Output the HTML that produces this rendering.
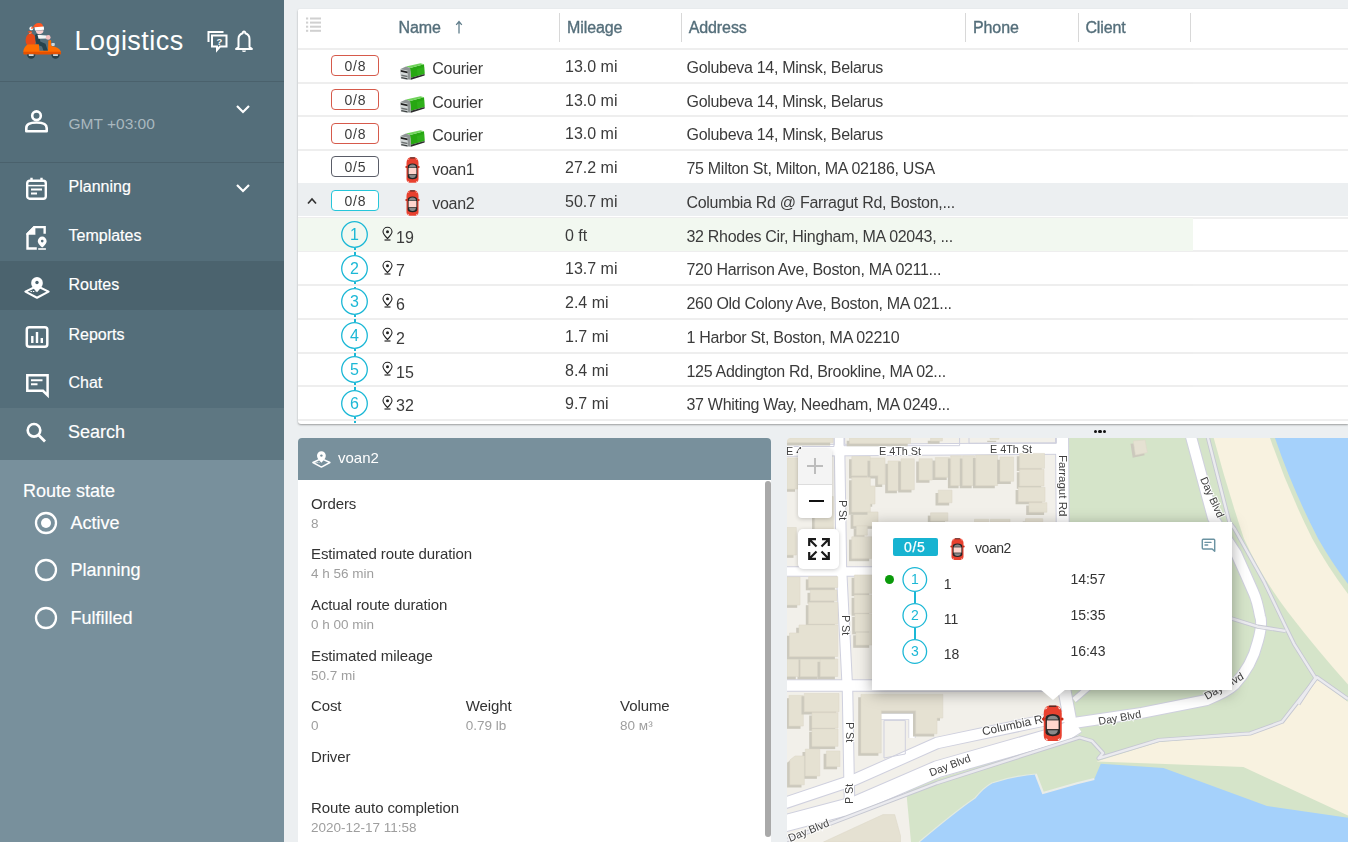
<!DOCTYPE html>
<html><head><meta charset="utf-8"><style>
html,body{margin:0;padding:0;}
body{width:1348px;height:842px;overflow:hidden;position:relative;background:#eceff1;font-family:"Liberation Sans", sans-serif;}
.t{position:absolute;line-height:1;white-space:nowrap;}
svg{overflow:visible}
</style></head><body>
<div style="position:absolute;left:0px;top:0px;width:284px;height:460px;background:#546e7a"></div><div style="position:absolute;left:0px;top:460px;width:284px;height:382px;background:#78909c"></div><div style="position:absolute;left:0px;top:81px;width:284px;height:1px;background:#4a616c"></div><div style="position:absolute;left:0px;top:162px;width:284px;height:1px;background:#4a616c"></div><div style="position:absolute;left:0px;top:261px;width:284px;height:49px;background:#4b636e"></div><div style="position:absolute;left:0px;top:407.5px;width:284px;height:52.5px;background:#5e7782"></div><svg style="position:absolute;left:22px;top:22px;" width="40" height="38" viewBox="0 0 40 38">
<path d="M5.5 10 Q7 8.5 9.5 9.3 Q10.5 10.5 9.5 11.5 Z" fill="#e8501e"/>
<path d="M8 11 Q13.5 12 13.8 18 Q14 24 8.5 24 Q3.5 24 3.6 18 Q3.8 13 8 11Z" fill="#e64a19"/>
<path d="M7.2 11.5 L9.5 10.8" stroke="#ffd0c0" stroke-width="0.7"/>
<path d="M13 13 Q15 11 17.5 12 L18.2 19.5 L23.5 21.8 L25.8 28.8 L21.5 28.8 L20 24.5 L14.5 22.5 Q13 19 13 13Z" fill="#26434d"/>
<path d="M15.5 12.8 L24.5 13.6 L25 16.5 L16.5 16.8 Z" fill="#f4f4f4"/>
<circle cx="26.2" cy="15.4" r="2.4" fill="#f6c0c0"/>
<path d="M13.8 8.5 Q14 12 17.5 12.2 Q21.5 12 21.5 8.3 Z" fill="#f9cfcf"/>
<path d="M11 5.5 Q12.5 0.8 17 1 Q21 1.2 21 5 Z" fill="#ff5722"/>
<path d="M12.5 5.2 L21.8 4.4 L22.1 7.8 L13 8.6 Z" fill="#ffffff"/>
<circle cx="9.3" cy="6.4" r="1.9" fill="#ffffff"/>
<path d="M11 5.5 L9.3 6.4" stroke="#ff5722" stroke-width="1.5"/>
<path d="M1.3 30 Q1.6 25 5.5 22.5 L16.8 22.2 L17.5 28.8 L26 28.8 L26.3 18.5 L29 18 L29.3 24 Q37.5 25 39 30 Z" fill="#ff6d00"/>
<rect x="29.3" y="20.9" width="3.5" height="3" rx="0.8" fill="#cfd8dc"/>
<rect x="1.3" y="29.8" width="37.7" height="2.7" rx="1" fill="#e65100"/>
<path d="M5 32.5 a4.2 4.2 0 0 0 8.4 0z" fill="#263f48"/>
<path d="M29.3 32.5 a4.2 4.2 0 0 0 8.4 0z" fill="#263f48"/>
<rect x="6.8" y="32.4" width="4.8" height="1.4" fill="#fff"/>
<rect x="31.1" y="32.4" width="4.8" height="1.4" fill="#fff"/>
</svg><div class="t" style="left:74.5px;top:28.14px;font-size:27px;color:#fff;font-weight:400;letter-spacing:0.45px">Logistics</div><svg style="position:absolute;left:206px;top:29px;" width="22" height="23" viewBox="0 0 22 23">
<path d="M2.5 13 V3 H17.5" fill="none" stroke="#fff" stroke-width="2"/>
<path d="M6 6.5 H20.5 V17.5 H14 L11 21 V17.5 H6 Z" fill="none" stroke="#fff" stroke-width="2" stroke-linejoin="miter"/>
<text x="13.3" y="15.6" font-size="9.5" font-weight="bold" fill="#fff" text-anchor="middle">?</text>
</svg><svg style="position:absolute;left:234px;top:29px;" width="20" height="23" viewBox="0 0 20 23">
<path d="M10 2.5 a1.3 1.3 0 0 1 1.3 1.3 V4.3 A6 6 0 0 1 15.5 10 V18 L18 20 H2 L4.5 18 V10 A6 6 0 0 1 8.7 4.3 V3.8 A1.3 1.3 0 0 1 10 2.5Z" fill="none" stroke="#fff" stroke-width="2" stroke-linejoin="round"/>
<path d="M8 21.5 h4 a2 1.5 0 0 1 -4 0z" fill="#fff"/>
</svg><svg style="position:absolute;left:24px;top:108px;" width="25" height="26" viewBox="0 0 25 26">
<circle cx="12.5" cy="7.7" r="4.3" fill="none" stroke="#fff" stroke-width="2.6"/>
<path d="M2.3 23.3 V20 Q2.3 14.5 12.5 14.5 Q22.7 14.5 22.7 20 V23.3 Z" fill="none" stroke="#fff" stroke-width="2.6" stroke-linejoin="round"/>
</svg><div class="t" style="left:68.5px;top:115.68px;font-size:15.5px;color:#a9b8bf;font-weight:400;">GMT +03:00</div><svg style="position:absolute;left:236px;top:104.5px;" width="14" height="8" viewBox="0 0 14 8"><path d="M1 1 L7.0 7 L13 1" fill="none" stroke="#fff" stroke-width="2.2"/></svg><svg style="position:absolute;left:236px;top:183.5px;" width="14" height="8" viewBox="0 0 14 8"><path d="M1 1 L7.0 7 L13 1" fill="none" stroke="#fff" stroke-width="2.2"/></svg><svg style="position:absolute;left:25px;top:177px;" width="23" height="24" viewBox="0 0 23 24">
<rect x="2.2" y="3.7" width="18.6" height="18" rx="2.5" fill="none" stroke="#fff" stroke-width="2.4"/>
<path d="M6.5 0.8 V5 M16.5 0.8 V5" stroke="#fff" stroke-width="2.4"/>
<path d="M2.2 8.6 H20.8" stroke="#fff" stroke-width="1.5"/>
<path d="M6 12.5 H17 M6 16.5 H12" stroke="#fff" stroke-width="2"/>
</svg><div class="t" style="left:68.5px;top:179.45px;font-size:16px;color:#fff;font-weight:400;-webkit-text-stroke:0.18px #fff">Planning</div><svg style="position:absolute;left:25px;top:225px;" width="23" height="26" viewBox="0 0 23 26">
<path d="M11.8 23.5 H2.5 V9.2 L9.2 2.1 H19.65 V8.8" fill="none" stroke="#fff" stroke-width="2.4" stroke-linejoin="miter"/>
<path d="M1.3 8.6 L9 0.9 L10.4 0.9 L10.4 9.8 L1.3 9.8Z" fill="#fff"/>
<path d="M17.2 22.6 C13.6 19.2 12.8 17.8 12.8 16 A4.4 4.4 0 0 1 21.6 16 C21.6 17.8 20.8 19.2 17.2 22.6Z" fill="#fff"/>
<circle cx="17.2" cy="16.1" r="1.35" fill="#546e7a"/>
<path d="M13.2 24 H20.9" stroke="#fff" stroke-width="1.6"/>
</svg><div class="t" style="left:68.5px;top:228.45px;font-size:16px;color:#fff;font-weight:400;-webkit-text-stroke:0.18px #fff">Templates</div><svg style="position:absolute;left:24px;top:276px;" width="26" height="24" viewBox="0 0 26 24">
<path d="M1.4 15.6 L13 10 L24.6 15.6 L13 21.8 Z" fill="none" stroke="#fff" stroke-width="2.1" stroke-linejoin="round"/>
<path d="M6.5 15.5 H11.5" stroke="#fff" stroke-width="1.1" stroke-dasharray="1.4 1"/>
<path d="M13 16.2 C8.8 12 7.2 10 7.2 6.8 A5.8 5.8 0 0 1 18.8 6.8 C18.8 10 17.2 12 13 16.2Z" fill="#fff"/>
<circle cx="13" cy="6.5" r="1.7" fill="#4b636e"/>
</svg><div class="t" style="left:68.5px;top:277.45px;font-size:16px;color:#fff;font-weight:400;-webkit-text-stroke:0.18px #fff">Routes</div><svg style="position:absolute;left:25px;top:325px;" width="24" height="23" viewBox="0 0 24 23">
<rect x="1.8" y="2.3" width="20.5" height="19.5" rx="2.5" fill="none" stroke="#fff" stroke-width="2.5"/>
<path d="M7.3 18 V11 M12 18 V7 M16.8 18 V13" stroke="#fff" stroke-width="2.4"/>
</svg><div class="t" style="left:68.5px;top:326.55px;font-size:16px;color:#fff;font-weight:400;-webkit-text-stroke:0.18px #fff">Reports</div><svg style="position:absolute;left:25px;top:373px;" width="25" height="24" viewBox="0 0 25 24">
<path d="M2.3 2.3 H22.6 V22.3 L18 17.8 H2.3 Z" fill="none" stroke="#fff" stroke-width="2.5" stroke-linejoin="miter"/>
<path d="M6 7.3 H17.5 M6 11.3 H12.5" stroke="#fff" stroke-width="2"/>
</svg><div class="t" style="left:68.5px;top:375.45px;font-size:16px;color:#fff;font-weight:400;-webkit-text-stroke:0.18px #fff">Chat</div><svg style="position:absolute;left:25px;top:421px;" width="22" height="23" viewBox="0 0 22 23">
<circle cx="9" cy="9.3" r="6.3" fill="none" stroke="#fff" stroke-width="2.6"/>
<path d="M13.5 14 L20 20.5" stroke="#fff" stroke-width="2.8"/>
</svg><div class="t" style="left:68px;top:423.16px;font-size:18px;color:#fff;font-weight:400;-webkit-text-stroke:0.18px #fff">Search</div><div class="t" style="left:23px;top:482.36px;font-size:18px;color:#fff;font-weight:400;-webkit-text-stroke:0.18px #fff">Route state</div><svg style="position:absolute;left:34px;top:511.20000000000005px;" width="24" height="24" viewBox="0 0 24 24"><circle cx="12" cy="12" r="10" fill="none" stroke="#fff" stroke-width="2.3"/><circle cx="12" cy="12" r="5" fill="#fff"/></svg><div class="t" style="left:70.5px;top:513.96px;font-size:18px;color:#fff;font-weight:400;-webkit-text-stroke:0.18px #fff">Active</div><svg style="position:absolute;left:34px;top:558.2px;" width="24" height="24" viewBox="0 0 24 24"><circle cx="12" cy="12" r="10" fill="none" stroke="#fff" stroke-width="2.3"/></svg><div class="t" style="left:70.5px;top:561.46px;font-size:18px;color:#fff;font-weight:400;-webkit-text-stroke:0.18px #fff">Planning</div><svg style="position:absolute;left:34px;top:606.1px;" width="24" height="24" viewBox="0 0 24 24"><circle cx="12" cy="12" r="10" fill="none" stroke="#fff" stroke-width="2.3"/></svg><div class="t" style="left:70.5px;top:608.96px;font-size:18px;color:#fff;font-weight:400;-webkit-text-stroke:0.18px #fff">Fulfilled</div><div style="position:absolute;left:0;top:0;width:1348px;height:842px;will-change:transform"><div style="position:absolute;left:298px;top:9px;width:1050px;height:415px;background:#fff;border-radius:1.5px 0 0 3px;box-shadow:0 1px 2px rgba(0,0,0,0.35)"></div><svg style="position:absolute;left:305px;top:16px;" width="17" height="17" viewBox="0 0 17 17">
<g fill="#d0d0d0"><rect x="1" y="1.5" width="2.2" height="2"/><rect x="5" y="1.5" width="11" height="2"/>
<rect x="1" y="5.6" width="2.2" height="2"/><rect x="5" y="5.6" width="11" height="2"/>
<rect x="1" y="9.7" width="2.2" height="2"/><rect x="5" y="9.7" width="11" height="2"/>
<rect x="1" y="13.8" width="2.2" height="2"/><rect x="5" y="13.8" width="11" height="2"/></g>
</svg><div class="t" style="left:398.5px;top:19.55px;font-size:16px;color:#546e7a;font-weight:400;-webkit-text-stroke:0.35px #546e7a;letter-spacing:-0.1px">Name</div><svg style="position:absolute;left:454px;top:20px;" width="10" height="14" viewBox="0 0 10 14"><path d="M5 13.5 V2 M2.2 4.8 L5 1.5 L7.8 4.8" fill="none" stroke="#607d8b" stroke-width="1.3"/></svg><div class="t" style="left:567px;top:19.55px;font-size:16px;color:#546e7a;font-weight:400;-webkit-text-stroke:0.35px #546e7a;letter-spacing:-0.1px">Mileage</div><div class="t" style="left:688.7px;top:19.55px;font-size:16px;color:#546e7a;font-weight:400;-webkit-text-stroke:0.35px #546e7a;letter-spacing:-0.1px">Address</div><div class="t" style="left:973px;top:19.55px;font-size:16px;color:#546e7a;font-weight:400;-webkit-text-stroke:0.35px #546e7a;letter-spacing:-0.1px">Phone</div><div class="t" style="left:1085.4px;top:19.55px;font-size:16px;color:#546e7a;font-weight:400;-webkit-text-stroke:0.35px #546e7a;letter-spacing:-0.1px">Client</div><div style="position:absolute;left:559px;top:13px;width:1px;height:29px;background:#d8d8d8"></div><div style="position:absolute;left:681px;top:13px;width:1px;height:29px;background:#d8d8d8"></div><div style="position:absolute;left:965px;top:13px;width:1px;height:29px;background:#d8d8d8"></div><div style="position:absolute;left:1078px;top:13px;width:1px;height:29px;background:#d8d8d8"></div><div style="position:absolute;left:1190px;top:13px;width:1px;height:29px;background:#d8d8d8"></div><div style="position:absolute;left:298px;top:48px;width:895px;height:2px;background:#eeeeee"></div><div style="position:absolute;left:1193px;top:48px;width:155px;height:1.5px;background:#efefef"></div><div style="position:absolute;left:298px;top:82px;width:895px;height:2px;background:#eeeeee"></div><div style="position:absolute;left:1193px;top:82px;width:155px;height:1.5px;background:#efefef"></div><div style="position:absolute;left:298px;top:115px;width:895px;height:2px;background:#eeeeee"></div><div style="position:absolute;left:1193px;top:115px;width:155px;height:1.5px;background:#efefef"></div><div style="position:absolute;left:298px;top:149px;width:895px;height:2px;background:#eeeeee"></div><div style="position:absolute;left:1193px;top:149px;width:155px;height:1.5px;background:#efefef"></div><div style="position:absolute;left:298px;top:183px;width:895px;height:2px;background:#eeeeee"></div><div style="position:absolute;left:1193px;top:183px;width:155px;height:1.5px;background:#efefef"></div><div style="position:absolute;left:298px;top:217px;width:895px;height:2px;background:#eeeeee"></div><div style="position:absolute;left:1193px;top:217px;width:155px;height:1.5px;background:#efefef"></div><div style="position:absolute;left:298px;top:250px;width:895px;height:2px;background:#eeeeee"></div><div style="position:absolute;left:1193px;top:250px;width:155px;height:1.5px;background:#efefef"></div><div style="position:absolute;left:298px;top:284px;width:895px;height:2px;background:#eeeeee"></div><div style="position:absolute;left:1193px;top:284px;width:155px;height:1.5px;background:#efefef"></div><div style="position:absolute;left:298px;top:318px;width:895px;height:2px;background:#eeeeee"></div><div style="position:absolute;left:1193px;top:318px;width:155px;height:1.5px;background:#efefef"></div><div style="position:absolute;left:298px;top:352px;width:895px;height:2px;background:#eeeeee"></div><div style="position:absolute;left:1193px;top:352px;width:155px;height:1.5px;background:#efefef"></div><div style="position:absolute;left:298px;top:385px;width:895px;height:2px;background:#eeeeee"></div><div style="position:absolute;left:1193px;top:385px;width:155px;height:1.5px;background:#efefef"></div><div style="position:absolute;left:298px;top:419px;width:895px;height:2px;background:#eeeeee"></div><div style="position:absolute;left:1193px;top:419px;width:155px;height:1.5px;background:#efefef"></div><div style="position:absolute;left:298px;top:183px;width:1050px;height:33px;background:#eceff1"></div><div style="position:absolute;left:298px;top:218px;width:895px;height:33px;background:#f2f8f0"></div><div style="position:absolute;left:331px;top:55px;width:46px;height:19px;border:1px solid #d65a4b;border-radius:4px;background:#fff"></div><div class="t" style="left:344.5px;top:58px;font-size:14px;line-height:16px;color:#3b3b3b;font-weight:400;letter-spacing:0.8px">0/8</div><svg style="position:absolute;left:400px;top:63px;" width="26" height="18" viewBox="0 0 26 18">
<path d="M10 5 L24 1.3 L24.6 11 L11 14.8z" fill="#27a712"/>
<path d="M6 3.4 L20.5 0.3 L24 1.3 L10 5z" fill="#6fd35a"/>
<path d="M17 6 L24.2 4 L24.5 10.5 L17.5 12.5z" fill="#35b51f" opacity="0.6"/>
<path d="M0.5 6 L6 3.4 L10 5 L11 16.8 L1 15.8z" fill="#8e9494"/>
<path d="M0.5 6.2 L7.5 7.6 L8 17 L1 15.8z" fill="#d3d8d8"/>
<path d="M0.8 7 L7.5 8.5 L7.5 10.2 L0.8 8.8z" fill="#1e1e1e"/>
<path d="M1.3 11.5 L7.5 12.8 L7.5 14.2 L1.3 13z" fill="#6d7272"/>
<path d="M1.3 14 L7.5 15.3 L7.6 16.5 L1.3 15.3z" fill="#3a3e3e"/>
<path d="M11 14.8 L24.6 11 L24.6 12.6 L11 16.8z" fill="#2c2c2c"/>
</svg><div class="t" style="left:432.3px;top:60px;font-size:16px;line-height:17px;color:#3b3b3b;font-weight:400;letter-spacing:-0.3px">Courier</div><div class="t" style="left:565px;top:58px;font-size:16px;line-height:17px;color:#3b3b3b;font-weight:400;">13.0 mi</div><div class="t" style="left:686.5px;top:59px;font-size:16px;line-height:17px;color:#3b3b3b;font-weight:400;letter-spacing:-0.3px">Golubeva 14, Minsk, Belarus</div><div style="position:absolute;left:331px;top:89px;width:46px;height:19px;border:1px solid #d65a4b;border-radius:4px;background:#fff"></div><div class="t" style="left:344.5px;top:92px;font-size:14px;line-height:16px;color:#3b3b3b;font-weight:400;letter-spacing:0.8px">0/8</div><svg style="position:absolute;left:400px;top:96px;" width="26" height="18" viewBox="0 0 26 18">
<path d="M10 5 L24 1.3 L24.6 11 L11 14.8z" fill="#27a712"/>
<path d="M6 3.4 L20.5 0.3 L24 1.3 L10 5z" fill="#6fd35a"/>
<path d="M17 6 L24.2 4 L24.5 10.5 L17.5 12.5z" fill="#35b51f" opacity="0.6"/>
<path d="M0.5 6 L6 3.4 L10 5 L11 16.8 L1 15.8z" fill="#8e9494"/>
<path d="M0.5 6.2 L7.5 7.6 L8 17 L1 15.8z" fill="#d3d8d8"/>
<path d="M0.8 7 L7.5 8.5 L7.5 10.2 L0.8 8.8z" fill="#1e1e1e"/>
<path d="M1.3 11.5 L7.5 12.8 L7.5 14.2 L1.3 13z" fill="#6d7272"/>
<path d="M1.3 14 L7.5 15.3 L7.6 16.5 L1.3 15.3z" fill="#3a3e3e"/>
<path d="M11 14.8 L24.6 11 L24.6 12.6 L11 16.8z" fill="#2c2c2c"/>
</svg><div class="t" style="left:432.3px;top:94px;font-size:16px;line-height:17px;color:#3b3b3b;font-weight:400;letter-spacing:-0.3px">Courier</div><div class="t" style="left:565px;top:92px;font-size:16px;line-height:17px;color:#3b3b3b;font-weight:400;">13.0 mi</div><div class="t" style="left:686.5px;top:93px;font-size:16px;line-height:17px;color:#3b3b3b;font-weight:400;letter-spacing:-0.3px">Golubeva 14, Minsk, Belarus</div><div style="position:absolute;left:331px;top:123px;width:46px;height:19px;border:1px solid #d65a4b;border-radius:4px;background:#fff"></div><div class="t" style="left:344.5px;top:126px;font-size:14px;line-height:16px;color:#3b3b3b;font-weight:400;letter-spacing:0.8px">0/8</div><svg style="position:absolute;left:400px;top:130px;" width="26" height="18" viewBox="0 0 26 18">
<path d="M10 5 L24 1.3 L24.6 11 L11 14.8z" fill="#27a712"/>
<path d="M6 3.4 L20.5 0.3 L24 1.3 L10 5z" fill="#6fd35a"/>
<path d="M17 6 L24.2 4 L24.5 10.5 L17.5 12.5z" fill="#35b51f" opacity="0.6"/>
<path d="M0.5 6 L6 3.4 L10 5 L11 16.8 L1 15.8z" fill="#8e9494"/>
<path d="M0.5 6.2 L7.5 7.6 L8 17 L1 15.8z" fill="#d3d8d8"/>
<path d="M0.8 7 L7.5 8.5 L7.5 10.2 L0.8 8.8z" fill="#1e1e1e"/>
<path d="M1.3 11.5 L7.5 12.8 L7.5 14.2 L1.3 13z" fill="#6d7272"/>
<path d="M1.3 14 L7.5 15.3 L7.6 16.5 L1.3 15.3z" fill="#3a3e3e"/>
<path d="M11 14.8 L24.6 11 L24.6 12.6 L11 16.8z" fill="#2c2c2c"/>
</svg><div class="t" style="left:432.3px;top:127px;font-size:16px;line-height:17px;color:#3b3b3b;font-weight:400;letter-spacing:-0.3px">Courier</div><div class="t" style="left:565px;top:125px;font-size:16px;line-height:17px;color:#3b3b3b;font-weight:400;">13.0 mi</div><div class="t" style="left:686.5px;top:126px;font-size:16px;line-height:17px;color:#3b3b3b;font-weight:400;letter-spacing:-0.3px">Golubeva 14, Minsk, Belarus</div><div style="position:absolute;left:331px;top:156px;width:46px;height:19px;border:1px solid #5a5d68;border-radius:4px;background:#fff"></div><div class="t" style="left:344.5px;top:159px;font-size:14px;line-height:16px;color:#3b3b3b;font-weight:400;letter-spacing:0.8px">0/5</div><svg style="position:absolute;left:406px;top:157px;" width="13" height="26" viewBox="0 0 13 26">
<path d="M3.5 0.5 L9.5 0.5 Q12.4 1.5 12.5 6 L12.5 22 Q12.4 25.3 9.5 25.8 L3.5 25.8 Q0.6 25.3 0.5 22 L0.5 6 Q0.6 1.5 3.5 0.5Z" fill="#e8412f"/>
<rect x="4" y="0.3" width="5" height="1.2" rx="0.4" fill="#5a2a24"/>
<path d="M1.6 3 L2.8 1.8 M11.4 3 L10.2 1.8 M1.8 24 L3 25 M11.2 24 L10 25" stroke="#fff" stroke-width="0.7" opacity="0.85"/>
<path d="M1.7 9.5 Q1.8 6.8 6.5 6.5 Q11.2 6.8 11.3 9.5 L11.3 19.5 Q11.2 22.2 6.5 22.3 Q1.8 22.2 1.7 19.5Z" fill="#262626"/>
<path d="M2.9 10.4 Q3.2 7.8 6.5 7.6 Q9.8 7.8 10.1 10.4Z" fill="#8a8a8a"/>
<rect x="2.6" y="11" width="7.8" height="6.2" fill="#ffd6ce"/>
<path d="M3.1 18 L9.9 18 Q9.7 20.9 6.5 21.1 Q3.3 20.9 3.1 18Z" fill="#8a8a8a"/>
<ellipse cx="0.3" cy="10" rx="1" ry="1.1" fill="#c62814"/><ellipse cx="12.7" cy="10" rx="1" ry="1.1" fill="#c62814"/>
</svg><div class="t" style="left:432.3px;top:161px;font-size:16px;line-height:17px;color:#3b3b3b;font-weight:400;letter-spacing:-0.3px">voan1</div><div class="t" style="left:565px;top:159px;font-size:16px;line-height:17px;color:#3b3b3b;font-weight:400;">27.2 mi</div><div class="t" style="left:686.5px;top:160px;font-size:16px;line-height:17px;color:#3b3b3b;font-weight:400;letter-spacing:-0.3px">75 Milton St, Milton, MA 02186, USA</div><div style="position:absolute;left:331px;top:190px;width:46px;height:19px;border:1px solid #26c6da;border-radius:4px;background:#fff"></div><div class="t" style="left:344.5px;top:193px;font-size:14px;line-height:16px;color:#3b3b3b;font-weight:400;letter-spacing:0.8px">0/8</div><svg style="position:absolute;left:406px;top:190px;" width="13" height="26" viewBox="0 0 13 26">
<path d="M3.5 0.5 L9.5 0.5 Q12.4 1.5 12.5 6 L12.5 22 Q12.4 25.3 9.5 25.8 L3.5 25.8 Q0.6 25.3 0.5 22 L0.5 6 Q0.6 1.5 3.5 0.5Z" fill="#e8412f"/>
<rect x="4" y="0.3" width="5" height="1.2" rx="0.4" fill="#5a2a24"/>
<path d="M1.6 3 L2.8 1.8 M11.4 3 L10.2 1.8 M1.8 24 L3 25 M11.2 24 L10 25" stroke="#fff" stroke-width="0.7" opacity="0.85"/>
<path d="M1.7 9.5 Q1.8 6.8 6.5 6.5 Q11.2 6.8 11.3 9.5 L11.3 19.5 Q11.2 22.2 6.5 22.3 Q1.8 22.2 1.7 19.5Z" fill="#262626"/>
<path d="M2.9 10.4 Q3.2 7.8 6.5 7.6 Q9.8 7.8 10.1 10.4Z" fill="#8a8a8a"/>
<rect x="2.6" y="11" width="7.8" height="6.2" fill="#ffd6ce"/>
<path d="M3.1 18 L9.9 18 Q9.7 20.9 6.5 21.1 Q3.3 20.9 3.1 18Z" fill="#8a8a8a"/>
<ellipse cx="0.3" cy="10" rx="1" ry="1.1" fill="#c62814"/><ellipse cx="12.7" cy="10" rx="1" ry="1.1" fill="#c62814"/>
</svg><div class="t" style="left:432.3px;top:195px;font-size:16px;line-height:17px;color:#3b3b3b;font-weight:400;letter-spacing:-0.3px">voan2</div><div class="t" style="left:565px;top:193px;font-size:16px;line-height:17px;color:#3b3b3b;font-weight:400;">50.7 mi</div><div class="t" style="left:686.5px;top:194px;font-size:16px;line-height:17px;color:#3b3b3b;font-weight:400;letter-spacing:-0.3px">Columbia Rd @ Farragut Rd, Boston,...</div><svg style="position:absolute;left:307.2px;top:198.3px;" width="10" height="6.5" viewBox="0 0 10 6.5"><path d="M1 5.5 L5.0 1 L9 5.5" fill="none" stroke="#333" stroke-width="1.7"/></svg><svg style="position:absolute;left:341px;top:220.9px;" width="27" height="27" viewBox="0 0 27 27"><circle cx="13.5" cy="13.5" r="12.8" fill="none" stroke="#1cb8d6" stroke-width="1.3"/><text x="13.5" y="19.3" font-size="16" fill="#1cb8d6" text-anchor="middle">1</text></svg><svg style="position:absolute;left:382px;top:227px;" width="11" height="14" viewBox="0 0 11 14"><path d="M5.5 11.5 C2 8 1 6.3 1 4.8 A4.5 4.5 0 0 1 10 4.8 C10 6.3 9 8 5.5 11.5Z" fill="none" stroke="#222" stroke-width="1.1"/>
<circle cx="5.5" cy="4.8" r="1.5" fill="#222"/><path d="M2.5 13 H8.5" stroke="#222" stroke-width="1.2"/></svg><div class="t" style="left:396px;top:229px;font-size:16px;line-height:17px;color:#3b3b3b;font-weight:400;">19</div><div class="t" style="left:565px;top:227px;font-size:16px;line-height:17px;color:#3b3b3b;font-weight:400;">0 ft</div><div class="t" style="left:686.5px;top:228px;font-size:16px;line-height:17px;color:#3b3b3b;font-weight:400;letter-spacing:-0.3px">32 Rhodes Cir, Hingham, MA 02043, ...</div><svg style="position:absolute;left:341px;top:254.65px;" width="27" height="27" viewBox="0 0 27 27"><circle cx="13.5" cy="13.5" r="12.8" fill="none" stroke="#1cb8d6" stroke-width="1.3"/><text x="13.5" y="19.3" font-size="16" fill="#1cb8d6" text-anchor="middle">2</text></svg><svg style="position:absolute;left:382px;top:261px;" width="11" height="14" viewBox="0 0 11 14"><path d="M5.5 11.5 C2 8 1 6.3 1 4.8 A4.5 4.5 0 0 1 10 4.8 C10 6.3 9 8 5.5 11.5Z" fill="none" stroke="#222" stroke-width="1.1"/>
<circle cx="5.5" cy="4.8" r="1.5" fill="#222"/><path d="M2.5 13 H8.5" stroke="#222" stroke-width="1.2"/></svg><div class="t" style="left:396px;top:262px;font-size:16px;line-height:17px;color:#3b3b3b;font-weight:400;">7</div><div class="t" style="left:565px;top:260px;font-size:16px;line-height:17px;color:#3b3b3b;font-weight:400;">13.7 mi</div><div class="t" style="left:686.5px;top:261px;font-size:16px;line-height:17px;color:#3b3b3b;font-weight:400;letter-spacing:-0.3px">720 Harrison Ave, Boston, MA 0211...</div><svg style="position:absolute;left:341px;top:288.4px;" width="27" height="27" viewBox="0 0 27 27"><circle cx="13.5" cy="13.5" r="12.8" fill="none" stroke="#1cb8d6" stroke-width="1.3"/><text x="13.5" y="19.3" font-size="16" fill="#1cb8d6" text-anchor="middle">3</text></svg><svg style="position:absolute;left:382px;top:294px;" width="11" height="14" viewBox="0 0 11 14"><path d="M5.5 11.5 C2 8 1 6.3 1 4.8 A4.5 4.5 0 0 1 10 4.8 C10 6.3 9 8 5.5 11.5Z" fill="none" stroke="#222" stroke-width="1.1"/>
<circle cx="5.5" cy="4.8" r="1.5" fill="#222"/><path d="M2.5 13 H8.5" stroke="#222" stroke-width="1.2"/></svg><div class="t" style="left:396px;top:296px;font-size:16px;line-height:17px;color:#3b3b3b;font-weight:400;">6</div><div class="t" style="left:565px;top:294px;font-size:16px;line-height:17px;color:#3b3b3b;font-weight:400;">2.4 mi</div><div class="t" style="left:686.5px;top:295px;font-size:16px;line-height:17px;color:#3b3b3b;font-weight:400;letter-spacing:-0.3px">260 Old Colony Ave, Boston, MA 021...</div><svg style="position:absolute;left:341px;top:322.15px;" width="27" height="27" viewBox="0 0 27 27"><circle cx="13.5" cy="13.5" r="12.8" fill="none" stroke="#1cb8d6" stroke-width="1.3"/><text x="13.5" y="19.3" font-size="16" fill="#1cb8d6" text-anchor="middle">4</text></svg><svg style="position:absolute;left:382px;top:328px;" width="11" height="14" viewBox="0 0 11 14"><path d="M5.5 11.5 C2 8 1 6.3 1 4.8 A4.5 4.5 0 0 1 10 4.8 C10 6.3 9 8 5.5 11.5Z" fill="none" stroke="#222" stroke-width="1.1"/>
<circle cx="5.5" cy="4.8" r="1.5" fill="#222"/><path d="M2.5 13 H8.5" stroke="#222" stroke-width="1.2"/></svg><div class="t" style="left:396px;top:330px;font-size:16px;line-height:17px;color:#3b3b3b;font-weight:400;">2</div><div class="t" style="left:565px;top:328px;font-size:16px;line-height:17px;color:#3b3b3b;font-weight:400;">1.7 mi</div><div class="t" style="left:686.5px;top:329px;font-size:16px;line-height:17px;color:#3b3b3b;font-weight:400;letter-spacing:-0.3px">1 Harbor St, Boston, MA 02210</div><svg style="position:absolute;left:341px;top:355.9px;" width="27" height="27" viewBox="0 0 27 27"><circle cx="13.5" cy="13.5" r="12.8" fill="none" stroke="#1cb8d6" stroke-width="1.3"/><text x="13.5" y="19.3" font-size="16" fill="#1cb8d6" text-anchor="middle">5</text></svg><svg style="position:absolute;left:382px;top:362px;" width="11" height="14" viewBox="0 0 11 14"><path d="M5.5 11.5 C2 8 1 6.3 1 4.8 A4.5 4.5 0 0 1 10 4.8 C10 6.3 9 8 5.5 11.5Z" fill="none" stroke="#222" stroke-width="1.1"/>
<circle cx="5.5" cy="4.8" r="1.5" fill="#222"/><path d="M2.5 13 H8.5" stroke="#222" stroke-width="1.2"/></svg><div class="t" style="left:396px;top:364px;font-size:16px;line-height:17px;color:#3b3b3b;font-weight:400;">15</div><div class="t" style="left:565px;top:362px;font-size:16px;line-height:17px;color:#3b3b3b;font-weight:400;">8.4 mi</div><div class="t" style="left:686.5px;top:363px;font-size:16px;line-height:17px;color:#3b3b3b;font-weight:400;letter-spacing:-0.3px">125 Addington Rd, Brookline, MA 02...</div><svg style="position:absolute;left:341px;top:389.65px;" width="27" height="27" viewBox="0 0 27 27"><circle cx="13.5" cy="13.5" r="12.8" fill="none" stroke="#1cb8d6" stroke-width="1.3"/><text x="13.5" y="19.3" font-size="16" fill="#1cb8d6" text-anchor="middle">6</text></svg><svg style="position:absolute;left:382px;top:396px;" width="11" height="14" viewBox="0 0 11 14"><path d="M5.5 11.5 C2 8 1 6.3 1 4.8 A4.5 4.5 0 0 1 10 4.8 C10 6.3 9 8 5.5 11.5Z" fill="none" stroke="#222" stroke-width="1.1"/>
<circle cx="5.5" cy="4.8" r="1.5" fill="#222"/><path d="M2.5 13 H8.5" stroke="#222" stroke-width="1.2"/></svg><div class="t" style="left:396px;top:397px;font-size:16px;line-height:17px;color:#3b3b3b;font-weight:400;">32</div><div class="t" style="left:565px;top:395px;font-size:16px;line-height:17px;color:#3b3b3b;font-weight:400;">9.7 mi</div><div class="t" style="left:686.5px;top:396px;font-size:16px;line-height:17px;color:#3b3b3b;font-weight:400;letter-spacing:-0.3px">37 Whiting Way, Needham, MA 0249...</div><div style="position:absolute;left:354px;top:247.80px;width:2px;height:6.95px;background:repeating-linear-gradient(#1cb8d6 0 2.5px, transparent 2.5px 4.5px)"></div><div style="position:absolute;left:354px;top:281.55px;width:2px;height:6.95px;background:repeating-linear-gradient(#1cb8d6 0 2.5px, transparent 2.5px 4.5px)"></div><div style="position:absolute;left:354px;top:315.30px;width:2px;height:6.95px;background:repeating-linear-gradient(#1cb8d6 0 2.5px, transparent 2.5px 4.5px)"></div><div style="position:absolute;left:354px;top:349.05px;width:2px;height:6.95px;background:repeating-linear-gradient(#1cb8d6 0 2.5px, transparent 2.5px 4.5px)"></div><div style="position:absolute;left:354px;top:382.80px;width:2px;height:6.95px;background:repeating-linear-gradient(#1cb8d6 0 2.5px, transparent 2.5px 4.5px)"></div><div style="position:absolute;left:354px;top:416.55px;width:2px;height:6.95px;background:repeating-linear-gradient(#1cb8d6 0 2.5px, transparent 2.5px 4.5px)"></div><div style="position:absolute;left:1093.6px;top:429.7px;width:3.4px;height:3.4px;background:#111;border-radius:50%"></div><div style="position:absolute;left:1098.3px;top:429.7px;width:3.4px;height:3.4px;background:#111;border-radius:50%"></div><div style="position:absolute;left:1103.1px;top:429.7px;width:3.4px;height:3.4px;background:#111;border-radius:50%"></div><div style="position:absolute;left:298px;top:438px;width:473px;height:404px;background:#fff;border-radius:4px 4px 0 0"></div><div style="position:absolute;left:298px;top:438px;width:473px;height:42px;background:#78909c;border-radius:4px 4px 0 0"></div><svg style="position:absolute;left:312px;top:450px;" width="20" height="19" viewBox="0 0 20 19">
<path d="M0.9 12.5 L9.4 8.6 L17.9 12.5 L9.4 17.1 Z" fill="none" stroke="#fff" stroke-width="1.5" stroke-linejoin="round"/>
<path d="M3.5 12.4 H7.5" stroke="#fff" stroke-width="0.9" stroke-dasharray="1 0.8"/>
<path d="M9.4 12.8 C6.2 9.6 5 8 5 5.6 A4.4 4.4 0 0 1 13.8 5.6 C13.8 8 12.6 9.6 9.4 12.8Z" fill="#fff"/>
<circle cx="9.4" cy="5.6" r="1.2" fill="#78909c"/>
</svg><div class="t" style="left:338px;top:449px;font-size:15px;line-height:17px;color:#fff;font-weight:400;">voan2</div><div style="position:absolute;left:765px;top:481px;width:6px;height:356px;background:#a9a9a9;border-radius:3px"></div><div class="t" style="left:311px;top:495px;font-size:15px;line-height:17px;color:#333;font-weight:400;letter-spacing:-0.1px">Orders</div><div class="t" style="left:311px;top:516px;font-size:13.5px;line-height:15px;color:#9e9e9e;font-weight:400;">8</div><div class="t" style="left:311px;top:545px;font-size:15px;line-height:17px;color:#333;font-weight:400;letter-spacing:-0.1px">Estimated route duration</div><div class="t" style="left:311px;top:566px;font-size:13.5px;line-height:15px;color:#9e9e9e;font-weight:400;">4 h 56 min</div><div class="t" style="left:311px;top:596px;font-size:15px;line-height:17px;color:#333;font-weight:400;letter-spacing:-0.1px">Actual route duration</div><div class="t" style="left:311px;top:617px;font-size:13.5px;line-height:15px;color:#9e9e9e;font-weight:400;">0 h 00 min</div><div class="t" style="left:311px;top:647px;font-size:15px;line-height:17px;color:#333;font-weight:400;letter-spacing:-0.1px">Estimated mileage</div><div class="t" style="left:311px;top:668px;font-size:13.5px;line-height:15px;color:#9e9e9e;font-weight:400;">50.7 mi</div><div class="t" style="left:311px;top:697px;font-size:15px;line-height:17px;color:#333;font-weight:400;letter-spacing:-0.1px">Cost</div><div class="t" style="left:311px;top:718px;font-size:13.5px;line-height:15px;color:#9e9e9e;font-weight:400;">0</div><div class="t" style="left:465.8px;top:697px;font-size:15px;line-height:17px;color:#333;font-weight:400;letter-spacing:-0.1px">Weight</div><div class="t" style="left:465.8px;top:718px;font-size:13.5px;line-height:15px;color:#9e9e9e;font-weight:400;">0.79 lb</div><div class="t" style="left:620.1px;top:697px;font-size:15px;line-height:17px;color:#333;font-weight:400;letter-spacing:-0.1px">Volume</div><div class="t" style="left:620.1px;top:718px;font-size:13.5px;line-height:15px;color:#9e9e9e;font-weight:400;">80 м³</div><div class="t" style="left:311px;top:748px;font-size:15px;line-height:17px;color:#333;font-weight:400;letter-spacing:-0.1px">Driver</div><div class="t" style="left:311px;top:799px;font-size:15px;line-height:17px;color:#333;font-weight:400;letter-spacing:-0.1px">Route auto completion</div><div class="t" style="left:311px;top:820px;font-size:13.5px;line-height:15px;color:#9e9e9e;font-weight:400;">2020-12-17 11:58</div><div style="position:absolute;left:787px;top:438px;width:561px;height:404px;overflow:hidden;border-radius:4px 0 0 0;background:#f0efe9"><svg width="561" height="404" viewBox="0 0 561 404" style="position:absolute;left:0;top:0">
<rect width="561" height="404" fill="#f2f0ea"/>
<path d="M279,0 L561,0 L561,404 L124,404 L119,351 L150,341 L292,297 L283,290 Z" fill="#d5e4c9"/>
<path d="M426.7,0 Q440,50 456.9,100.5 Q475,140 500.7,173.8 Q530,212 561,246.5 L561,0 Z" fill="#f8f2e0"/>
<path d="M483,0 Q500,50 525.2,100.5 Q540,128 561,156 L561,0 Z" fill="#d5e4c9"/>
<path d="M488,0 Q505,50 531,100.5 Q545,125 561,146 L561,0 Z" fill="#a5d1fb"/>
<path d="M309.5,323.6 L372,304 L463,296.6 L495,284.7 L532,242.5 L561,264 L561,377.6 L456.4,329 L372,325.7 Z" fill="#f8f2e0"/>
<path d="M511,266 L529,241 L561,264 L561,272 Z" fill="#f8f2e0"/>
<path d="M132,404 Q170,372 188.4,359.7 Q196,350 204.8,345 Q225,338 248.7,336 L256,355 L290,345.2 L307.3,341 L313.8,325.7 L376.5,330 L480,368 L561,379.8 L561,404 Z" fill="#a5d1fb"/>
<path d="M248.7,336 L256,355 L290,345.2 L307.3,341" fill="none" stroke="#e9ece8" stroke-width="2.2"/>
<path d="M132,404 Q170,372 188.4,359.7 Q196,350 204.8,345 Q225,338 248.7,336" fill="none" stroke="#e3eadf" stroke-width="1.2"/>
<path d="M-5,12.5 L281,10.5" fill="none" stroke="#cfd0de" stroke-width="12.5" stroke-linejoin="round"/>
<path d="M52.3,-5 L54.4,130 L60.5,252 L62,338 L62.8,378" fill="none" stroke="#cfd0de" stroke-width="11.5" stroke-linejoin="round"/>
<path d="M275,-5 L277,250 L285,292" fill="none" stroke="#cfd0de" stroke-width="14.0" stroke-linejoin="round"/>
<path d="M-5,133.5 L300,133.5" fill="none" stroke="#cfd0de" stroke-width="10.5" stroke-linejoin="round"/>
<path d="M-5,247.5 L283,247.5" fill="none" stroke="#cfd0de" stroke-width="12.5" stroke-linejoin="round"/>
<path d="M-5,366 L67.3,341.8 L150,305 L252,283.5 L280,278" fill="none" stroke="#cfd0de" stroke-width="12.5" stroke-linejoin="round"/>
<path d="M-5,386 L67.3,367 L150,331.3 L278,294.8 L290,287" fill="none" stroke="#cfd0de" stroke-width="18.0" stroke-linejoin="round"/>
<path d="M276,291 L290,284.5 L354.8,274.9 L419.7,262 Q440,254 447.3,247 Q465,228 470.8,203.7 Q476,185 473,178 Q470,162 466.5,154.5 Q458,135 449.4,116 L426,80 L403,-5" fill="none" stroke="#cfd0de" stroke-width="12.0" stroke-linejoin="round"/>
<path d="M287,262 L302,249" fill="none" stroke="#cfd0de" stroke-width="7.0" stroke-linejoin="round"/>
<path d="M-5,12.5 L281,10.5" fill="none" stroke="#ffffff" stroke-width="10.5" stroke-linejoin="round"/>
<path d="M52.3,-5 L54.4,130 L60.5,252 L62,338 L62.8,378" fill="none" stroke="#ffffff" stroke-width="9.5" stroke-linejoin="round"/>
<path d="M275,-5 L277,250 L285,292" fill="none" stroke="#ffffff" stroke-width="12" stroke-linejoin="round"/>
<path d="M-5,133.5 L300,133.5" fill="none" stroke="#ffffff" stroke-width="8.5" stroke-linejoin="round"/>
<path d="M-5,247.5 L283,247.5" fill="none" stroke="#ffffff" stroke-width="10.5" stroke-linejoin="round"/>
<path d="M-5,366 L67.3,341.8 L150,305 L252,283.5 L280,278" fill="none" stroke="#ffffff" stroke-width="10.5" stroke-linejoin="round"/>
<path d="M-5,386 L67.3,367 L150,331.3 L278,294.8 L290,287" fill="none" stroke="#ffffff" stroke-width="16" stroke-linejoin="round"/>
<path d="M276,291 L290,284.5 L354.8,274.9 L419.7,262 Q440,254 447.3,247 Q465,228 470.8,203.7 Q476,185 473,178 Q470,162 466.5,154.5 Q458,135 449.4,116 L426,80 L403,-5" fill="none" stroke="#ffffff" stroke-width="10" stroke-linejoin="round"/>
<path d="M287,262 L302,249" fill="none" stroke="#ffffff" stroke-width="5" stroke-linejoin="round"/>
<path d="M-5,404 L150,345 L292.6,299.4 L305,303 L316,315 L311.6,320.3 L372,302 L463,295.5 L495.3,283.6 L530,239.3 L561,261" fill="none" stroke="#c6c8d2" stroke-width="4.2" stroke-linejoin="round"/>
<path d="M419.7,-5 L442.3,84 L447.3,90.4 L477.2,143.9 L498.6,188.7 L507,205.8 L528.5,240 L511.4,266" fill="none" stroke="#c6c8d2" stroke-width="4.2" stroke-linejoin="round"/>
<path d="M443,180 L470.8,188.7 L498.6,193" fill="none" stroke="#c6c8d2" stroke-width="4.2" stroke-linejoin="round"/>
<path d="M-5,404 L150,345 L292.6,299.4 L305,303 L316,315 L311.6,320.3 L372,302 L463,295.5 L495.3,283.6 L530,239.3 L561,261" fill="none" stroke="#ebebef" stroke-width="2.4" stroke-linejoin="round"/>
<path d="M419.7,-5 L442.3,84 L447.3,90.4 L477.2,143.9 L498.6,188.7 L507,205.8 L528.5,240 L511.4,266" fill="none" stroke="#ebebef" stroke-width="2.4" stroke-linejoin="round"/>
<path d="M443,180 L470.8,188.7 L498.6,193" fill="none" stroke="#ebebef" stroke-width="2.4" stroke-linejoin="round"/>
<path d="M90,315 L90,278.5 L125,278.5 L125,300" fill="none" stroke="#cfd0de" stroke-width="7"/>
<path d="M90,315 L90,278.5 L125,278.5 L125,300" fill="none" stroke="#fff" stroke-width="5.5"/>
<path d="M97,282.4 L118.3,282.4 L118.3,316 L97,320 Z" fill="none" stroke="#cfd0de" stroke-width="1"/>
<path d="M-1,8.5 L47,8.5 L47,-1" fill="none" stroke="#cfd0de" stroke-width="1"/>
<path d="M57,-1 L57,7.7 L172.6,7.7 L172.6,-1" fill="none" stroke="#cfd0de" stroke-width="1"/>
<path d="M182,-1 L182,5.3 L269.4,5.3 L269.4,-1" fill="none" stroke="#cfd0de" stroke-width="1"/>
<path d="M-2.8,2.8 L43.2,2.8 L43.2,7.3999999999999995 L-2.8,7.3999999999999995Z" fill="#ccc9bd"/>
<path d="M0,0 L46,0 L46,4.6 L0,4.6Z" fill="#e5e1d2" stroke="#ddd9c9" stroke-width="0.6"/>
<path d="M59.7,2.8 L120.7,2.8 L120.7,8.2 L59.7,8.2Z" fill="#ccc9bd"/>
<path d="M62.5,0 L123.5,0 L123.5,5.4 L62.5,5.4Z" fill="#e5e1d2" stroke="#ddd9c9" stroke-width="0.6"/>
<path d="M140.79999999999998,2.8 L152.6,2.8 L152.6,5.8 L140.79999999999998,5.8Z" fill="#ccc9bd"/>
<path d="M143.6,0 L155.4,0 L155.4,3 L143.6,3Z" fill="#e5e1d2" stroke="#ddd9c9" stroke-width="0.6"/>
<path d="M200.2,2.8 L209.2,2.8 L209.2,4.0 L200.2,4.0Z" fill="#ccc9bd"/>
<path d="M203,0 L212,0 L212,1.2 L203,1.2Z" fill="#e5e1d2" stroke="#ddd9c9" stroke-width="0.6"/>
<path d="M62.0,21.3 L80.5,21.3 L80.5,40.599999999999994 L62.0,40.599999999999994Z" fill="#ccc9bd"/>
<path d="M64.8,18.5 L83.3,18.5 L83.3,37.8 L64.8,37.8Z" fill="#e5e1d2" stroke="#ddd9c9" stroke-width="0.6"/>
<path d="M98.2,25.8 L109.9,25.8 L109.9,55.3 L98.2,55.3Z" fill="#ccc9bd"/>
<path d="M101,23 L112.7,23 L112.7,52.5 L101,52.5Z" fill="#e5e1d2" stroke="#ddd9c9" stroke-width="0.6"/>
<path d="M111.2,23.6 L124.5,23.6 L124.5,54.5 L111.2,54.5Z" fill="#ccc9bd"/>
<path d="M114,20.8 L127.3,20.8 L127.3,51.7 L114,51.7Z" fill="#e5e1d2" stroke="#ddd9c9" stroke-width="0.6"/>
<path d="M129.2,23.6 L142.5,23.6 L142.5,44.8 L129.2,44.8Z" fill="#ccc9bd"/>
<path d="M132,20.8 L145.3,20.8 L145.3,42 L132,42Z" fill="#e5e1d2" stroke="#ddd9c9" stroke-width="0.6"/>
<path d="M145.5,22.400000000000002 L159.7,22.400000000000002 L159.7,42.0 L145.5,42.0Z" fill="#ccc9bd"/>
<path d="M148.3,19.6 L162.5,19.6 L162.5,39.2 L148.3,39.2Z" fill="#e5e1d2" stroke="#ddd9c9" stroke-width="0.6"/>
<path d="M160.89999999999998,20.6 L171.6,20.6 L171.6,50.3 L160.89999999999998,50.3Z" fill="#ccc9bd"/>
<path d="M163.7,17.8 L174.4,17.8 L174.4,47.5 L163.7,47.5Z" fill="#e5e1d2" stroke="#ddd9c9" stroke-width="0.6"/>
<path d="M172.79999999999998,20.6 L184.7,20.6 L184.7,50.3 L172.79999999999998,50.3Z" fill="#ccc9bd"/>
<path d="M175.6,17.8 L187.5,17.8 L187.5,47.5 L175.6,47.5Z" fill="#e5e1d2" stroke="#ddd9c9" stroke-width="0.6"/>
<path d="M185.89999999999998,20.0 L207.79999999999998,20.0 L207.79999999999998,50.3 L185.89999999999998,50.3Z" fill="#ccc9bd"/>
<path d="M188.7,17.2 L210.6,17.2 L210.6,47.5 L188.7,47.5Z" fill="#e5e1d2" stroke="#ddd9c9" stroke-width="0.6"/>
<path d="M210.2,21.8 L223.79999999999998,21.8 L223.79999999999998,46.099999999999994 L210.2,46.099999999999994Z" fill="#ccc9bd"/>
<path d="M213,19 L226.6,19 L226.6,43.3 L213,43.3Z" fill="#e5e1d2" stroke="#ddd9c9" stroke-width="0.6"/>
<path d="M229.79999999999998,18.2 L254.7,18.2 L254.7,33.1 L229.79999999999998,33.1Z" fill="#ccc9bd"/>
<path d="M232.6,15.4 L257.5,15.4 L257.5,30.3 L232.6,30.3Z" fill="#e5e1d2" stroke="#ddd9c9" stroke-width="0.6"/>
<path d="M229.79999999999998,34.3 L254.2,34.3 L254.2,50.8 L229.79999999999998,50.8Z" fill="#ccc9bd"/>
<path d="M232.6,31.5 L257,31.5 L257,48 L232.6,48Z" fill="#e5e1d2" stroke="#ddd9c9" stroke-width="0.6"/>
<path d="M228.6,52.099999999999994 L255.2,52.099999999999994 L255.2,66.3 L228.6,66.3Z" fill="#ccc9bd"/>
<path d="M231.4,49.3 L258,49.3 L258,63.5 L231.4,63.5Z" fill="#e5e1d2" stroke="#ddd9c9" stroke-width="0.6"/>
<path d="M239.2,67.5 L257.09999999999997,67.5 L257.09999999999997,77.0 L239.2,77.0Z" fill="#ccc9bd"/>
<path d="M242,64.7 L259.9,64.7 L259.9,74.2 L242,74.2Z" fill="#e5e1d2" stroke="#ddd9c9" stroke-width="0.6"/>
<path d="M148.5,55.0 L162.2,55.0 L162.2,67.5 L148.5,67.5Z" fill="#ccc9bd"/>
<path d="M151.3,52.2 L165,52.2 L165,64.7 L151.3,64.7Z" fill="#e5e1d2" stroke="#ddd9c9" stroke-width="0.6"/>
<path d="M63.60000000000001,76.8 L88.2,76.8 L88.2,90.8 L63.60000000000001,90.8Z" fill="#ccc9bd"/>
<path d="M66.4,74 L91,74 L91,88 L66.4,88Z" fill="#e5e1d2" stroke="#ddd9c9" stroke-width="0.6"/>
<path d="M66.7,90.8 L77.5,90.8 L77.5,100.0 L66.7,100.0Z" fill="#ccc9bd"/>
<path d="M69.5,88 L80.3,88 L80.3,97.2 L69.5,97.2Z" fill="#e5e1d2" stroke="#ddd9c9" stroke-width="0.6"/>
<path d="M62.0,101.6 L82.2,101.6 L82.2,123.2 L62.0,123.2Z" fill="#ccc9bd"/>
<path d="M64.8,98.8 L85,98.8 L85,120.4 L64.8,120.4Z" fill="#e5e1d2" stroke="#ddd9c9" stroke-width="0.6"/>
<path d="M140.79999999999998,77.6 L158.0,77.6 L158.0,85.8 L140.79999999999998,85.8Z" fill="#ccc9bd"/>
<path d="M143.6,74.8 L160.8,74.8 L160.8,83 L143.6,83Z" fill="#e5e1d2" stroke="#ddd9c9" stroke-width="0.6"/>
<path d="M184.7,84.1 L198.89999999999998,84.1 L198.89999999999998,86.8 L184.7,86.8Z" fill="#ccc9bd"/>
<path d="M187.5,81.3 L201.7,81.3 L201.7,84 L187.5,84Z" fill="#e5e1d2" stroke="#ddd9c9" stroke-width="0.6"/>
<path d="M200.7,84.1 L220.2,84.1 L220.2,86.8 L200.7,86.8Z" fill="#ccc9bd"/>
<path d="M203.5,81.3 L223,81.3 L223,84 L203.5,84Z" fill="#e5e1d2" stroke="#ddd9c9" stroke-width="0.6"/>
<path d="M235.7,83.5 L252.89999999999998,83.5 L252.89999999999998,86.8 L235.7,86.8Z" fill="#ccc9bd"/>
<path d="M238.5,80.7 L255.7,80.7 L255.7,84 L238.5,84Z" fill="#e5e1d2" stroke="#ddd9c9" stroke-width="0.6"/>
<path d="M-2.8,22.8 L8.0,22.8 L8.0,53.8 L-2.8,53.8Z" fill="#ccc9bd"/>
<path d="M0,20 L10.8,20 L10.8,51 L0,51Z" fill="#e5e1d2" stroke="#ddd9c9" stroke-width="0.6"/>
<path d="M25.0,61.4 L43.5,61.4 L43.5,93.8 L25.0,93.8Z" fill="#ccc9bd"/>
<path d="M27.8,58.6 L46.3,58.6 L46.3,91 L27.8,91Z" fill="#e5e1d2" stroke="#ddd9c9" stroke-width="0.6"/>
<path d="M-2.8,92.3 L6.500000000000001,92.3 L6.500000000000001,119.8 L-2.8,119.8Z" fill="#ccc9bd"/>
<path d="M0,89.5 L9.3,89.5 L9.3,117 L0,117Z" fill="#e5e1d2" stroke="#ddd9c9" stroke-width="0.6"/>
<path d="M64.60000000000001,139.8 L82.2,139.8 L82.2,158.10000000000002 L64.60000000000001,158.10000000000002Z" fill="#ccc9bd"/>
<path d="M67.4,137 L85,137 L85,155.3 L67.4,155.3Z" fill="#e5e1d2" stroke="#ddd9c9" stroke-width="0.6"/>
<path d="M64.60000000000001,159.8 L82.2,159.8 L82.2,177.8 L64.60000000000001,177.8Z" fill="#ccc9bd"/>
<path d="M67.4,157 L85,157 L85,175 L67.4,175Z" fill="#e5e1d2" stroke="#ddd9c9" stroke-width="0.6"/>
<path d="M65.2,178.8 L82.2,178.8 L82.2,196.3 L65.2,196.3Z" fill="#ccc9bd"/>
<path d="M68,176 L85,176 L85,193.5 L68,193.5Z" fill="#e5e1d2" stroke="#ddd9c9" stroke-width="0.6"/>
<path d="M66.2,197.3 L82.2,197.3 L82.2,209.8 L66.2,209.8Z" fill="#ccc9bd"/>
<path d="M69,194.5 L85,194.5 L85,207 L69,207Z" fill="#e5e1d2" stroke="#ddd9c9" stroke-width="0.6"/>
<path d="M18.8,141.4 L47.900000000000006,141.4 L47.900000000000006,152.3 L18.8,152.3Z" fill="#ccc9bd"/>
<path d="M21.6,138.6 L50.7,138.6 L50.7,149.5 L21.6,149.5Z" fill="#e5e1d2" stroke="#ddd9c9" stroke-width="0.6"/>
<path d="M20.5,154.8 L47.2,154.8 L47.2,165.60000000000002 L20.5,165.60000000000002Z" fill="#ccc9bd"/>
<path d="M23.3,152 L50,152 L50,162.8 L23.3,162.8Z" fill="#e5e1d2" stroke="#ddd9c9" stroke-width="0.6"/>
<path d="M18.8,167.20000000000002 L47.900000000000006,167.20000000000002 L47.900000000000006,188.8 L18.8,188.8Z" fill="#ccc9bd"/>
<path d="M21.6,164.4 L50.7,164.4 L50.7,186 L21.6,186Z" fill="#e5e1d2" stroke="#ddd9c9" stroke-width="0.6"/>
<path d="M10.5,221.3 L30.499999999999996,221.3 L30.499999999999996,241.3 L10.5,241.3Z" fill="#ccc9bd"/>
<path d="M13.3,218.5 L33.3,218.5 L33.3,238.5 L13.3,238.5Z" fill="#e5e1d2" stroke="#ddd9c9" stroke-width="0.6"/>
<path d="M30.499999999999996,223.8 L47.900000000000006,223.8 L47.900000000000006,241.3 L30.499999999999996,241.3Z" fill="#ccc9bd"/>
<path d="M33.3,221 L50.7,221 L50.7,238.5 L33.3,238.5Z" fill="#e5e1d2" stroke="#ddd9c9" stroke-width="0.6"/>
<path d="M-2.8,211.3 L8.8,211.3 L8.8,241.3 L-2.8,241.3Z" fill="#ccc9bd"/>
<path d="M0,208.5 L11.6,208.5 L11.6,238.5 L0,238.5Z" fill="#e5e1d2" stroke="#ddd9c9" stroke-width="0.6"/>
<path d="M-0.7999999999999998,260.2 L13.5,260.2 L13.5,290.8 L-0.7999999999999998,290.8Z" fill="#ccc9bd"/>
<path d="M2,257.4 L16.3,257.4 L16.3,288 L2,288Z" fill="#e5e1d2" stroke="#ddd9c9" stroke-width="0.6"/>
<path d="M14.5,258.3 L49.2,258.3 L49.2,276.5 L14.5,276.5Z" fill="#ccc9bd"/>
<path d="M17.3,255.5 L52,255.5 L52,273.7 L17.3,273.7Z" fill="#e5e1d2" stroke="#ddd9c9" stroke-width="0.6"/>
<path d="M22.2,277.5 L48.2,277.5 L48.2,292.8 L22.2,292.8Z" fill="#ccc9bd"/>
<path d="M25,274.7 L51,274.7 L51,290 L25,290Z" fill="#e5e1d2" stroke="#ddd9c9" stroke-width="0.6"/>
<path d="M22.2,293.8 L48.2,293.8 L48.2,311.1 L22.2,311.1Z" fill="#ccc9bd"/>
<path d="M25,291 L51,291 L51,308.3 L25,308.3Z" fill="#e5e1d2" stroke="#ddd9c9" stroke-width="0.6"/>
<path d="M15.5,314.0 L29.900000000000002,314.0 L29.900000000000002,340.8 L15.5,340.8Z" fill="#ccc9bd"/>
<path d="M18.3,311.2 L32.7,311.2 L32.7,338 L18.3,338Z" fill="#e5e1d2" stroke="#ddd9c9" stroke-width="0.6"/>
<path d="M36.6,315.8 L50.1,315.8 L50.1,331.3 L36.6,331.3Z" fill="#ccc9bd"/>
<path d="M39.4,313 L52.9,313 L52.9,328.5 L39.4,328.5Z" fill="#e5e1d2" stroke="#ddd9c9" stroke-width="0.6"/>
<path d="M80.5,22.8 L95.2,22.8 L95.2,49.099999999999994 L88.2,49.099999999999994 L88.2,40.599999999999994 L80.5,40.599999999999994Z" fill="#ccc9bd"/>
<path d="M83.3,20 L98,20 L98,46.3 L91,46.3 L91,37.8 L83.3,37.8Z" fill="#e5e1d2" stroke="#ddd9c9" stroke-width="0.6"/>
<path d="M62.0,42.199999999999996 L80.5,42.199999999999996 L80.5,50.8 L85.2,50.8 L85.2,68.8 L80.5,68.8 L80.5,76.8 L62.0,76.8Z" fill="#ccc9bd"/>
<path d="M64.8,39.4 L83.3,39.4 L83.3,48 L88,48 L88,66 L83.3,66 L83.3,74 L64.8,74Z" fill="#e5e1d2" stroke="#ddd9c9" stroke-width="0.6"/>
<path d="M9.2,189.8 L47.900000000000006,189.8 L47.900000000000006,221.3 L-0.2999999999999998,221.3 L-0.2999999999999998,197.8 L9.2,197.8Z" fill="#ccc9bd"/>
<path d="M12,187 L50.7,187 L50.7,218.5 L2.5,218.5 L2.5,195 L12,195Z" fill="#e5e1d2" stroke="#ddd9c9" stroke-width="0.6"/>
<path d="M-2.8,141.8 L10.2,141.8 L10.2,169.8 L-2.8,169.8Z" fill="#ccc9bd"/>
<path d="M0,139 L13,139 L13,167 L0,167Z" fill="#e5e1d2" stroke="#ddd9c9" stroke-width="0.6"/>
<path d="M0.10000000000000009,324.8 L5.2,320.8 L14.5,320.8 L14.5,349.6 L0.10000000000000009,349.6Z" fill="#ccc9bd"/>
<path d="M2.9,322 L8,318 L17.3,318 L17.3,346.8 L2.9,346.8Z" fill="#e5e1d2" stroke="#ddd9c9" stroke-width="0.6"/>
<path d="M71.2,259.2 L153.0,259.2 L153.0,282.8 L147.2,282.8 L147.2,298.6 L126.00000000000001,298.6 L126.00000000000001,275.6 L91.4,275.6 L91.4,317.8 L71.2,317.8Z" fill="#ccc9bd"/>
<path d="M74,256.4 L155.8,256.4 L155.8,280 L150,280 L150,295.8 L128.8,295.8 L128.8,272.8 L94.2,272.8 L94.2,315 L74,315Z" fill="#e5e1d2" stroke="#ddd9c9" stroke-width="0.6"/>
<path d="M33.7,406.8 L74.2,388.1 L93.2,379.40000000000003 L104.9,379.40000000000003 L110.7,400.6 L110.7,406.8Z" fill="#ccc9bd"/>
<path d="M36.5,404 L77,385.3 L96,376.6 L107.7,376.6 L113.5,397.8 L113.5,404Z" fill="#e5e1d2" stroke="#ddd9c9" stroke-width="0.6"/>
<path d="M343.5,5.8 L355.2,4.8 L357.59999999999997,17.3 L345.7,19.8Z" fill="#ccc9bd"/>
<path d="M346.3,3 L358,2 L360.4,14.5 L348.5,17Z" fill="#e5e1d2" stroke="#ddd9c9" stroke-width="0.6"/>
<text x="92" y="16.5" transform="rotate(0 92 16.5)" font-size="10.8" fill="#404040" stroke="#fff" stroke-width="2.2" stroke-opacity="0.85" paint-order="stroke">E 4Th St</text>
<text x="203" y="15" transform="rotate(0 203 15)" font-size="10.8" fill="#404040" stroke="#fff" stroke-width="2.2" stroke-opacity="0.85" paint-order="stroke">E 4Th St</text>
<text x="-1" y="17" transform="rotate(0 -1 17)" font-size="10.8" fill="#404040" stroke="#fff" stroke-width="2.2" stroke-opacity="0.85" paint-order="stroke">E 4</text>
<text x="51.5" y="62" transform="rotate(90 51.5 62)" font-size="10.8" fill="#404040" stroke="#fff" stroke-width="2.2" stroke-opacity="0.85" paint-order="stroke">P St</text>
<text x="54.5" y="177" transform="rotate(90 54.5 177)" font-size="10.8" fill="#404040" stroke="#fff" stroke-width="2.2" stroke-opacity="0.85" paint-order="stroke">P St</text>
<text x="58.5" y="284" transform="rotate(90 58.5 284)" font-size="10.8" fill="#404040" stroke="#fff" stroke-width="2.2" stroke-opacity="0.85" paint-order="stroke">P St</text>
<text x="65.5" y="366" transform="rotate(-90 65.5 366)" font-size="10.8" fill="#404040" stroke="#fff" stroke-width="2.2" stroke-opacity="0.85" paint-order="stroke">P St</text>
<text x="271.5" y="17" transform="rotate(90 271.5 17)" font-size="11.5" fill="#404040" stroke="#fff" stroke-width="2.2" stroke-opacity="0.85" paint-order="stroke">Farragut Rd</text>
<text x="413" y="41" transform="rotate(66 413 41)" font-size="10.8" fill="#404040" stroke="#fff" stroke-width="2.2" stroke-opacity="0.85" paint-order="stroke">Day Blvd</text>
<text x="196" y="297.5" transform="rotate(-12 196 297.5)" font-size="11.8" fill="#404040" stroke="#fff" stroke-width="2.2" stroke-opacity="0.85" paint-order="stroke">Columbia Rd</text>
<text x="312" y="287" transform="rotate(-10 312 287)" font-size="10.8" fill="#404040" stroke="#fff" stroke-width="2.2" stroke-opacity="0.85" paint-order="stroke">Day Blvd</text>
<text x="144" y="338.5" transform="rotate(-21 144 338.5)" font-size="10.8" fill="#404040" stroke="#fff" stroke-width="2.2" stroke-opacity="0.85" paint-order="stroke">Day Blvd</text>
<text x="3" y="404" transform="rotate(-22 3 404)" font-size="10.8" fill="#404040" stroke="#fff" stroke-width="2.2" stroke-opacity="0.85" paint-order="stroke">Day Blvd</text>
<text x="420" y="262" transform="rotate(-30 420 262)" font-size="10.8" fill="#404040" stroke="#fff" stroke-width="2.2" stroke-opacity="0.85" paint-order="stroke">Day Blvd</text>
</svg></div><div style="position:absolute;left:798px;top:449px;width:34px;height:69px;background:#fff;border-radius:4px;box-shadow:0 1px 4px rgba(0,0,0,0.2)"></div><div style="position:absolute;left:798px;top:449px;width:34px;height:34.5px;background:#f4f4f4;border-radius:4px 4px 0 0"></div><div style="position:absolute;left:798px;top:483.5px;width:34px;height:1px;background:#dddddd"></div><div style="position:absolute;left:807px;top:465px;width:16px;height:2px;background:#bdbdbd"></div><div style="position:absolute;left:814px;top:458px;width:2px;height:16px;background:#bdbdbd"></div><div style="position:absolute;left:808.8px;top:500.3px;width:15px;height:2.2px;background:#111"></div><div style="position:absolute;left:798px;top:529px;width:40.5px;height:40px;background:#fff;border-radius:5px;box-shadow:0 1px 4px rgba(0,0,0,0.2)"></div><svg style="position:absolute;left:807.5px;top:537.5px;" width="22" height="22" viewBox="0 0 22 22">
<g stroke="#1a1a1a" stroke-width="2.2" fill="none" stroke-linecap="butt">
<path d="M1.5 1.5 L8.5 8.5 M1.2 8 V1.2 H8"/><path d="M20.5 1.5 L13.5 8.5 M14 1.2 H20.8 V8"/>
<path d="M1.5 20.5 L8.5 13.5 M1.2 14 V20.8 H8"/><path d="M20.5 20.5 L13.5 13.5 M14 20.8 H20.8 V14"/></g>
</svg><svg style="position:absolute;left:1042.5px;top:704.5px;" width="22" height="38" viewBox="0 0 22 38"><g transform="scale(1.5,1.4)">
<path d="M3.5 0.5 L9.5 0.5 Q12.4 1.5 12.5 6 L12.5 22 Q12.4 25.3 9.5 25.8 L3.5 25.8 Q0.6 25.3 0.5 22 L0.5 6 Q0.6 1.5 3.5 0.5Z" fill="#e8412f"/>
<rect x="4" y="0.3" width="5" height="1.2" rx="0.4" fill="#5a2a24"/>
<path d="M1.6 3 L2.8 1.8 M11.4 3 L10.2 1.8 M1.8 24 L3 25 M11.2 24 L10 25" stroke="#fff" stroke-width="0.7" opacity="0.85"/>
<path d="M1.7 9.5 Q1.8 6.8 6.5 6.5 Q11.2 6.8 11.3 9.5 L11.3 19.5 Q11.2 22.2 6.5 22.3 Q1.8 22.2 1.7 19.5Z" fill="#262626"/>
<path d="M2.9 10.4 Q3.2 7.8 6.5 7.6 Q9.8 7.8 10.1 10.4Z" fill="#8a8a8a"/>
<rect x="2.6" y="11" width="7.8" height="6.2" fill="#ffd6ce"/>
<path d="M3.1 18 L9.9 18 Q9.7 20.9 6.5 21.1 Q3.3 20.9 3.1 18Z" fill="#8a8a8a"/>
<ellipse cx="0.3" cy="10" rx="1" ry="1.1" fill="#c62814"/><ellipse cx="12.7" cy="10" rx="1" ry="1.1" fill="#c62814"/>
</g></svg><div style="position:absolute;left:872px;top:522px;width:360px;height:168px;background:#fff;box-shadow:0 3px 14px rgba(0,0,0,0.35)"></div><svg style="position:absolute;left:1040px;top:689px;" width="26" height="12" viewBox="0 0 26 12"><path d="M0 0 L13 11 L26 0Z" fill="#fff"/></svg><div style="position:absolute;left:893px;top:538px;width:45px;height:18px;background:#17b3d1;border-radius:2px"></div><div class="t" style="left:904px;top:540.45px;font-size:14px;color:#fff;font-weight:400;-webkit-text-stroke:0.25px #fff;letter-spacing:0.7px">0/5</div><svg style="position:absolute;left:950.5px;top:537.5px;" width="13" height="22" viewBox="0 0 13 22"><g transform="scale(1,0.85)">
<path d="M3.5 0.5 L9.5 0.5 Q12.4 1.5 12.5 6 L12.5 22 Q12.4 25.3 9.5 25.8 L3.5 25.8 Q0.6 25.3 0.5 22 L0.5 6 Q0.6 1.5 3.5 0.5Z" fill="#e8412f"/>
<rect x="4" y="0.3" width="5" height="1.2" rx="0.4" fill="#5a2a24"/>
<path d="M1.6 3 L2.8 1.8 M11.4 3 L10.2 1.8 M1.8 24 L3 25 M11.2 24 L10 25" stroke="#fff" stroke-width="0.7" opacity="0.85"/>
<path d="M1.7 9.5 Q1.8 6.8 6.5 6.5 Q11.2 6.8 11.3 9.5 L11.3 19.5 Q11.2 22.2 6.5 22.3 Q1.8 22.2 1.7 19.5Z" fill="#262626"/>
<path d="M2.9 10.4 Q3.2 7.8 6.5 7.6 Q9.8 7.8 10.1 10.4Z" fill="#8a8a8a"/>
<rect x="2.6" y="11" width="7.8" height="6.2" fill="#ffd6ce"/>
<path d="M3.1 18 L9.9 18 Q9.7 20.9 6.5 21.1 Q3.3 20.9 3.1 18Z" fill="#8a8a8a"/>
<ellipse cx="0.3" cy="10" rx="1" ry="1.1" fill="#c62814"/><ellipse cx="12.7" cy="10" rx="1" ry="1.1" fill="#c62814"/>
</g></svg><div class="t" style="left:975px;top:540px;font-size:14px;line-height:16px;color:#333;font-weight:400;letter-spacing:-0.45px">voan2</div><svg style="position:absolute;left:1200px;top:537px;" width="17" height="17" viewBox="0 0 17 17"><path d="M3.2 2.3 H13.8 Q14.7 2.3 14.7 3.2 V14.3 L12.2 12 H3.2 Q2.3 12 2.3 11.1 V3.2 Q2.3 2.3 3.2 2.3Z" fill="none" stroke="#6b93a2" stroke-width="1.45" stroke-linejoin="round"/><path d="M5 5.4 H11 M5 8 H7.7" stroke="#6b93a2" stroke-width="1.4" stroke-linecap="round"/></svg><div style="position:absolute;left:885px;top:575px;width:9px;height:9px;border-radius:50%;background:#0a9a0a"></div><svg style="position:absolute;left:901.5px;top:566.8px;" width="26" height="25" viewBox="0 0 26 25"><circle cx="12.8" cy="12.5" r="11.8" fill="#fff" stroke="#1cb8d6" stroke-width="1.3"/><text x="12.8" y="17.3" font-size="14" fill="#1cb8d6" text-anchor="middle">1</text></svg><div style="position:absolute;left:913.5px;top:591.5999999999999px;width:2px;height:11.4px;background:#1cb8d6"></div><div class="t" style="left:943.7px;top:576px;font-size:14px;line-height:16px;color:#333;font-weight:400;">1</div><div class="t" style="left:1070.4px;top:571px;font-size:14px;line-height:16px;color:#333;font-weight:400;">14:57</div><svg style="position:absolute;left:901.5px;top:602.8px;" width="26" height="25" viewBox="0 0 26 25"><circle cx="12.8" cy="12.5" r="11.8" fill="#fff" stroke="#1cb8d6" stroke-width="1.3"/><text x="12.8" y="17.3" font-size="14" fill="#1cb8d6" text-anchor="middle">2</text></svg><div style="position:absolute;left:913.5px;top:627.5999999999999px;width:2px;height:11.4px;background:#1cb8d6"></div><div class="t" style="left:943.7px;top:611px;font-size:14px;line-height:16px;color:#333;font-weight:400;">11</div><div class="t" style="left:1070.4px;top:607px;font-size:14px;line-height:16px;color:#333;font-weight:400;">15:35</div><svg style="position:absolute;left:901.5px;top:638.8px;" width="26" height="25" viewBox="0 0 26 25"><circle cx="12.8" cy="12.5" r="11.8" fill="#fff" stroke="#1cb8d6" stroke-width="1.3"/><text x="12.8" y="17.3" font-size="14" fill="#1cb8d6" text-anchor="middle">3</text></svg><div class="t" style="left:943.7px;top:646px;font-size:14px;line-height:16px;color:#333;font-weight:400;">18</div><div class="t" style="left:1070.4px;top:643px;font-size:14px;line-height:16px;color:#333;font-weight:400;">16:43</div>
</div></body></html>
